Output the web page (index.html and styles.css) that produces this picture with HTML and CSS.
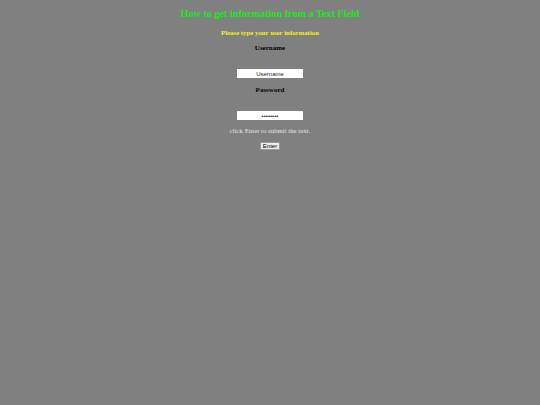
FILE: index.html
```html
<!DOCTYPE html>
<html>
<head>
<meta charset="utf-8">
<link rel="stylesheet" href="styles.css">
</head>
<body>
<div class="page">
  <h1 class="title">How to get information from a Text Field</h1>
  <p class="subtitle">Please type your user information</p>
  <p class="label">Username</p>
  <input class="field" type="text" value="Username">
  <p class="label label-pass">Password</p>
  <input class="field" type="password" value="password">
  <p class="hint">click Enter to submit the text.</p>
  <button class="btn" type="button">Enter</button>
</div>
</body>
</html>
```
FILE: styles.css
```css
html, body {
  margin: 0;
  padding: 0;
  background: #808080;
  height: 100%;
}
.page {
  display: flex;
  flex-direction: column;
  align-items: center;
  font-family: "Liberation Serif", serif;
  padding-top: 7px;
}
.title {
  margin: 0;
  font-size: 10.2px;
  font-weight: bold;
  color: #11ee11;
  line-height: 14px;
}
.subtitle {
  margin: 7px 0 0;
  font-size: 6.8px;
  font-weight: bold;
  color: #f0f020;
  line-height: 9px;
}
.label {
  margin: 7px 0 0;
  font-size: 7px;
  font-weight: bold;
  color: #000;
  line-height: 9px;
}
.label-pass {
  margin-top: 8px;
}
.field {
  margin: 16px 0 0;
  width: 66px;
  height: 9px;
  box-sizing: border-box;
  border: none;
  padding: 0;
  background: #fff;
  font-family: "Liberation Sans", sans-serif;
  font-size: 6px;
  text-align: center;
  color: #222;
  outline: none;
}
.hint {
  margin: 6px 0 0;
  font-size: 6.8px;
  color: #e4e4e4;
  line-height: 9px;
}
.btn {
  margin-top: 7px;
  width: 20px;
  height: 8px;
  padding: 0;
  font-family: "Liberation Sans", sans-serif;
  font-size: 6px;
  line-height: 6px;
  background: #efefef;
  border: 1px solid #999;
  color: #000;
}
```
